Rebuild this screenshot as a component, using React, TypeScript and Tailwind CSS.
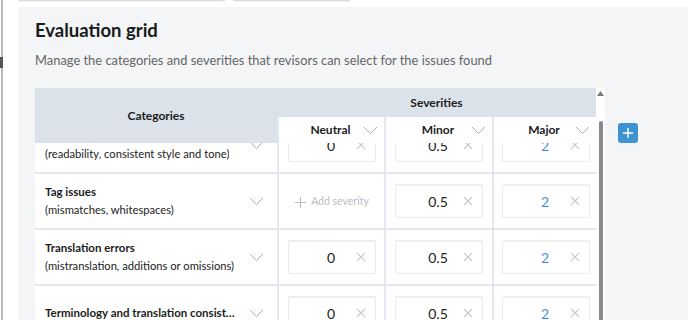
import React from 'react';

type Row = {
  title: string;
  desc?: string;
  neutral: string | null;
  minor: string;
  major: string;
};

const rows: Row[] = [
  { title: 'Style', desc: '(readability, consistent style and tone)', neutral: '0', minor: '0.5', major: '2' },
  { title: 'Tag issues', desc: '(mismatches, whitespaces)', neutral: null, minor: '0.5', major: '2' },
  { title: 'Translation errors', desc: '(mistranslation, additions or omissions)', neutral: '0', minor: '0.5', major: '2' },
  { title: 'Terminology and translation consistency', neutral: '0', minor: '0.5', major: '2' },
  { title: 'Spelling and grammar', desc: '(typos, punctuation, syntax)', neutral: '0', minor: '0.5', major: '2' },
];

function Chevron() {
  return (
    <svg width="15" height="9" viewBox="0 0 15 9" className="shrink-0">
      <polyline points="1,1 7.5,7.5 14,1" fill="none" stroke="#a9b1bb" strokeWidth="1" />
    </svg>
  );
}

function ValueBox({ value, blue }: { value: string; blue?: boolean }) {
  return (
    <div className="relative flex h-[34px] w-[88px] items-center rounded-[2px] border border-[#ececec] bg-white shadow-[inset_0_1px_2px_rgba(0,0,0,0.06)]">
      <span className={`w-[84px] text-center text-[14px] ${blue ? 'text-[#4a92d2]' : 'text-[#222]'}`}>{value}</span>
      <svg width="10" height="10" viewBox="0 0 10 10" className="absolute right-[9px] top-1/2 -translate-y-1/2">
        <path d="M1 1l8 8M9 1l-8 8" stroke="#c3c9d1" strokeWidth="1.1" />
      </svg>
    </div>
  );
}

export default function App() {
  const bodyRef = React.useRef<HTMLDivElement>(null);

  React.useLayoutEffect(() => {
    if (bodyRef.current) bodyRef.current.scrollTop = 25;
  }, []);

  return (
    <div className="flex h-[320px] w-[688px] overflow-hidden bg-white font-['Lato',sans-serif] text-[#1c1c1c]">
      <div className="relative w-[18px] shrink-0">
        <div className="ml-[1px] h-full w-[2px] bg-[#b9b9b9]" />
        <div className="absolute left-0 top-[57px] h-[11px] w-[3px] bg-[#555]" />
      </div>
      <div className="flex min-w-0 flex-1 flex-col">
        <div className="flex h-[4px] gap-[8px]">
          <div className="w-[207px] rounded-b-[4px] border-b border-[#dadada] bg-white shadow-[0_1px_1px_rgba(0,0,0,0.06)]" />
          <div className="w-[117px] rounded-b-[4px] border-b border-[#dadada] bg-white shadow-[0_1px_1px_rgba(0,0,0,0.06)]" />
        </div>
        <div className="mt-[6px] flex-1 bg-[#f4f5f7] pl-[17px] pt-[12px]">
          <h2 className="text-[18.5px] font-bold leading-[22px] text-[#1a1a1a]">Evaluation grid</h2>
          <p className="mt-[10px] text-[12.9px] leading-[18px] text-[#666]">
            Manage the categories and severities that revisors can select for the issues found
          </p>
          <div className="mt-[19px] flex items-start">
            <div className="w-[561px] bg-white">
              <div className="grid grid-cols-[242px_107px_108px_104px] grid-rows-[29px_26px] bg-[#dce2e9] text-[12px] font-bold">
                <div className="row-span-2 flex items-center justify-center">Categories</div>
                <div className="col-span-3 flex items-center justify-center">Severities</div>
                {['Neutral', 'Minor', 'Major'].map((s) => (
                  <div key={s} className="relative flex items-center justify-center border-l-2 border-[#e3e8ee] bg-white">
                    <span className="pr-[2px]">{s}</span>
                    <span className="absolute right-[6px] top-[9px]">
                      <Chevron />
                    </span>
                  </div>
                ))}
              </div>
              <div ref={bodyRef} className="h-[190px] overflow-hidden">
                {rows.map((r) => (
                  <div key={r.title} className="grid h-[56px] grid-cols-[242px_107px_108px_104px] border-b-2 border-[#e3e8ee]">
                    <div className="flex items-center justify-between gap-[10px] pl-[10px] pr-[13px]">
                      <div className="min-w-0 leading-[18px]">
                        <div className="truncate text-[11.5px] font-bold">{r.title}</div>
                        {r.desc && <div className="truncate text-[11.2px] text-[#222]">{r.desc}</div>}
                      </div>
                      <Chevron />
                    </div>
                    <div className="flex items-center border-l-2 border-[#e3e8ee] pl-[9px]">
                      {r.neutral === null ? (
                        <div className="flex w-[88px] items-center justify-center gap-[5px] pt-[2px] text-[10.5px] text-[#b7bec8]">
                          <svg width="11" height="11" viewBox="0 0 11 11">
                            <path d="M5.5 0v11M0 5.5h11" stroke="#b7bec8" strokeWidth="1.1" />
                          </svg>
                          <span>Add severity</span>
                        </div>
                      ) : (
                        <ValueBox value={r.neutral} />
                      )}
                    </div>
                    <div className="flex items-center border-l-2 border-[#e3e8ee] pl-[9px]">
                      <ValueBox value={r.minor} />
                    </div>
                    <div className="flex items-center border-l-2 border-[#e3e8ee] pl-[8px]">
                      <ValueBox value={r.major} blue />
                    </div>
                  </div>
                ))}
              </div>
            </div>
            <div className="flex h-[240px] w-[9px] flex-col items-center bg-white">
              <svg width="7" height="5" viewBox="0 0 7 5" className="mt-[3px]">
                <polygon points="3.5,0 7,5 0,5" fill="#7a7a7a" />
              </svg>
              <div className="mt-[25px] w-[4px] flex-1 rounded-[2px] bg-[#8a8a8a]" />
            </div>
            <button className="ml-[13px] mt-[35px] flex h-[20px] w-[20px] items-center justify-center rounded-[3px] bg-[#3d92cf]">
              <svg width="12" height="12" viewBox="0 0 12 12">
                <path d="M6 1v10M1 6h10" stroke="#fff" strokeWidth="1.4" />
              </svg>
            </button>
          </div>
        </div>
      </div>
    </div>
  );
}
